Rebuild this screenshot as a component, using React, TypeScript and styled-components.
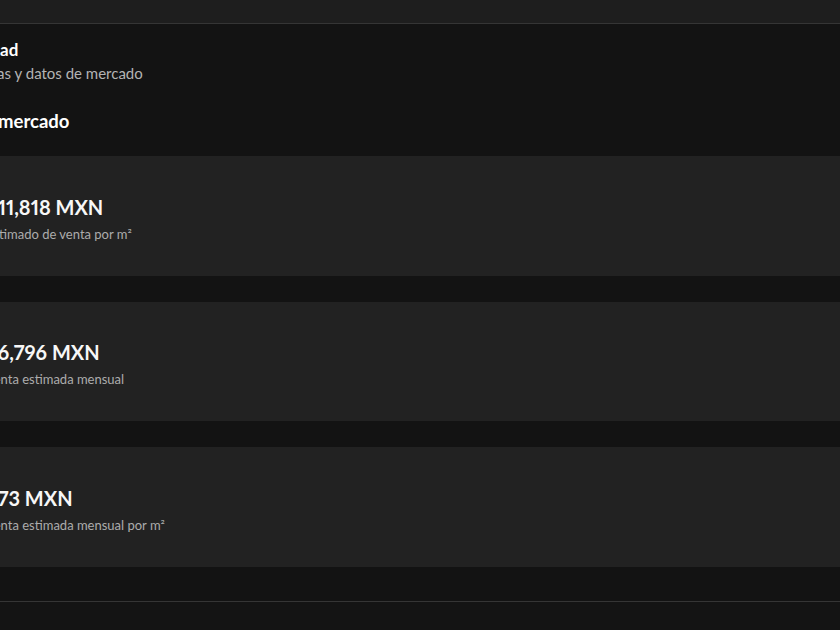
import React from "react";
import styled, { createGlobalStyle } from "styled-components";

const Global = createGlobalStyle`
  html, body {
    margin: 0;
    padding: 0;
    background: #131313;
    overflow: hidden;
  }
  body {
    font-family: Lato, "Noto Sans", "Liberation Sans", sans-serif;
    color: #f5f5f5;
  }
`;

const Page = styled.div`
  width: 840px;
  height: 630px;
  overflow: hidden;
  background: #131313;
  display: flex;
  flex-direction: column;
`;

const TopBar = styled.div`
  height: 23px;
  flex: none;
  background: #1e1e1e;
  border-bottom: 1px solid #353535;
`;

const Shifted = styled.div`
  margin-left: -100px;
  width: 1000px;
  display: flex;
  flex-direction: column;
`;

const Header = styled.header`
  padding: 14px 24px 0 24px;
  display: flex;
  flex-direction: column;
`;

const Title = styled.h2`
  margin: 0;
  font-size: 17px;
  line-height: 23px;
  font-weight: 700;
  color: #ffffff;
  white-space: nowrap;
`;

const Subtitle = styled.p`
  margin: 1px 0 0;
  font-size: 15px;
  line-height: 22px;
  font-weight: 400;
  color: #b4b4b4;
  white-space: nowrap;
`;

const Section = styled.section`
  padding: 0 24px 34.5px 20px;
  display: flex;
  flex-direction: column;
`;

const SectionTitle = styled.h3`
  margin: 26px 0 0;
  font-size: 18.5px;
  line-height: 22px;
  font-weight: 700;
  color: #ffffff;
  white-space: nowrap;
`;

const CardList = styled.div`
  margin-top: 24px;
  display: flex;
  flex-direction: column;
  gap: 26px;
`;

const Card = styled.div`
  height: 119.5px;
  background: #222222;
  padding: 2px 66px 0;
  display: flex;
  flex-direction: column;
  justify-content: center;
  box-sizing: border-box;
`;

const Value = styled.div`
  font-size: 20px;
  line-height: 28px;
  font-weight: 700;
  font-variant-numeric: proportional-nums;
  color: #f7f7f7;
  white-space: nowrap;
  margin-top: 2px;
`;

const Caption = styled.div`
  margin-top: 4px;
  font-size: 13px;
  line-height: 18px;
  color: #acacac;
  white-space: nowrap;
`;

const NextSection = styled.div`
  border-top: 1px solid #353535;
  flex: 1;
  background: #141414;
`;

const metrics = [
  { value: "$11,818 MXN", caption: "Estimado de venta por m²" },
  { value: "$6,796 MXN", caption: "Renta estimada mensual" },
  { value: "$73 MXN", caption: "Renta estimada mensual por m²" },
];

export default function App() {
  return (
    <>
      <Global />
      <Page>
        <TopBar />
        <Shifted>
          <Header>
            <Title>Rentabilidad</Title>
            <Subtitle>Según ventas y datos de mercado</Subtitle>
          </Header>
          <Section>
            <SectionTitle>Datos de mercado</SectionTitle>
            <CardList>
              {metrics.map((m) => (
                <Card key={m.caption}>
                  <Value>{m.value}</Value>
                  <Caption>{m.caption}</Caption>
                </Card>
              ))}
            </CardList>
          </Section>
        </Shifted>
        <NextSection />
      </Page>
    </>
  );
}
